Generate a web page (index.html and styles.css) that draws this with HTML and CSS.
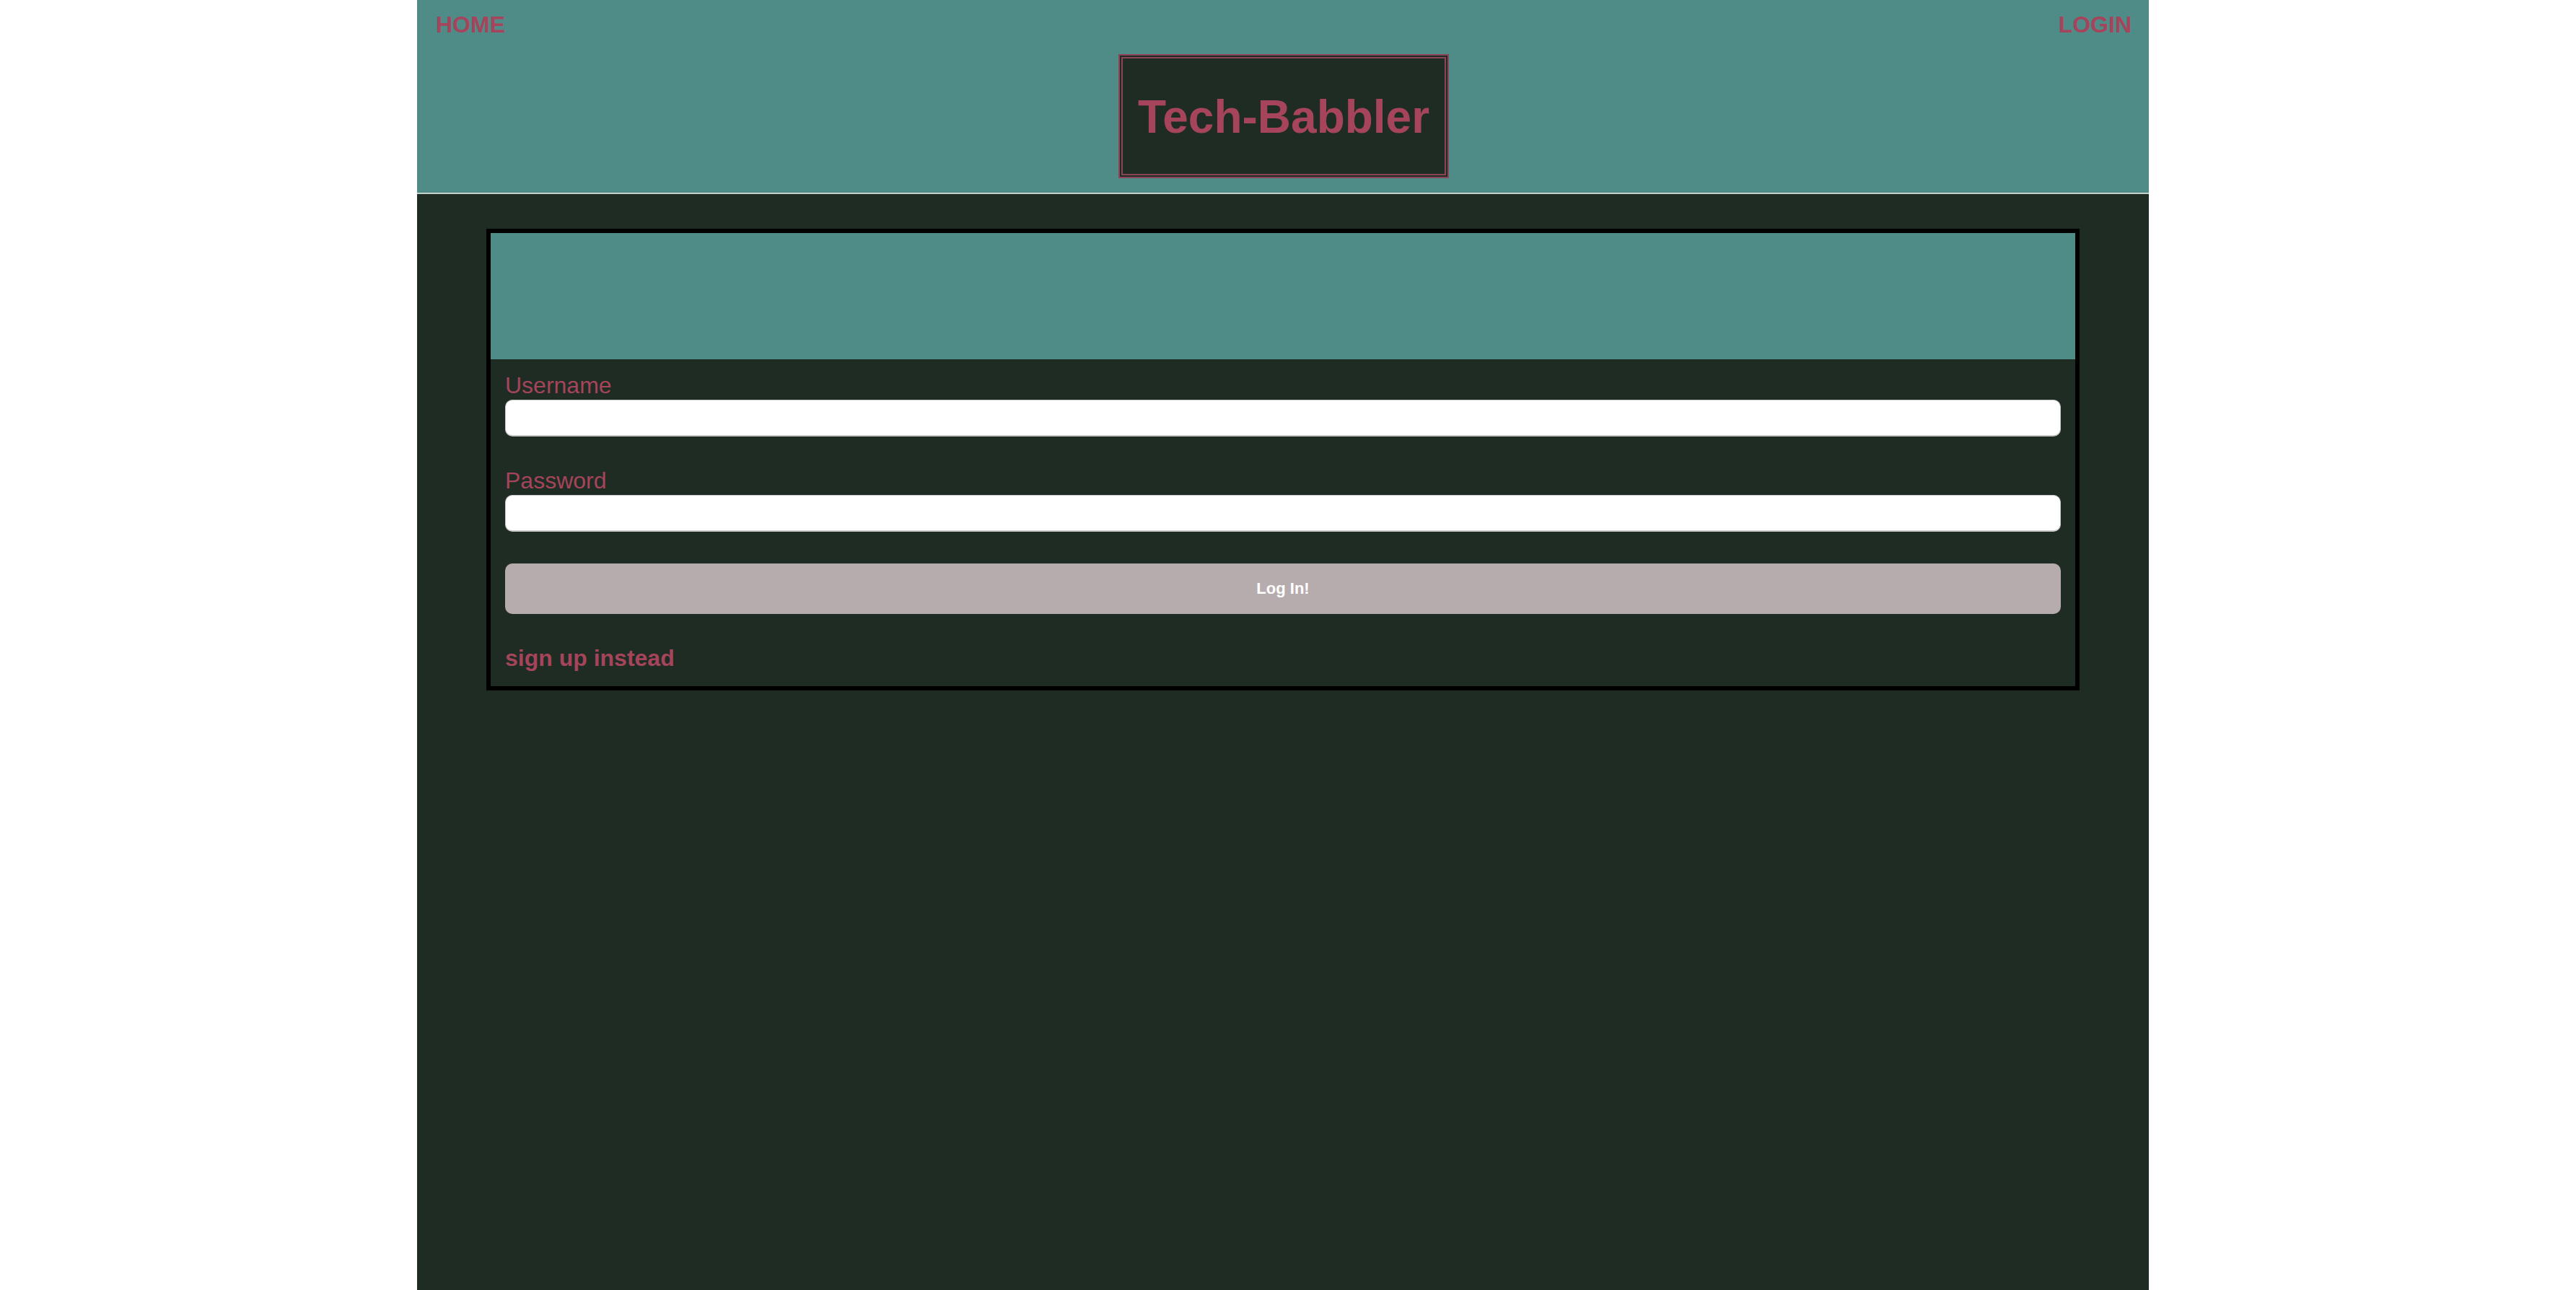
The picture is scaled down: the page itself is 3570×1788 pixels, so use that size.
FILE: index.html
```html
<!DOCTYPE html>
<html lang="en">
<head>
<meta charset="utf-8">
<title>Tech-Babbler</title>
<link rel="stylesheet" href="styles.css">
</head>
<body>
<div class="page">
  <header class="site-header">
    <nav class="nav">
      <a class="nav-link" href="#">HOME</a>
      <a class="nav-link" href="#">LOGIN</a>
    </nav>
    <div class="brand-row">
      <h1 class="brand">Tech-Babbler</h1>
    </div>
  </header>
  <main class="main">
    <section class="card">
      <div class="card-head"></div>
      <form class="card-body">
        <label class="field-label" for="username">Username</label>
        <input class="field-input" id="username" type="text">
        <label class="field-label field-label-next" for="password">Password</label>
        <input class="field-input" id="password" type="password">
        <button class="submit" type="button">Log In!</button>
        <a class="alt-link" href="#">sign up instead</a>
      </form>
    </section>
  </main>
</div>
</body>
</html>
```

FILE: styles.css
```css
* { box-sizing: border-box; }

html, body {
  margin: 0;
  padding: 0;
  background: #ffffff;
}

body {
  padding-right: 14px;
  font-family: "Liberation Sans", Arial, Helvetica, sans-serif;
}

.page {
  width: 2400px;
  margin: 0 auto;
  min-height: 1788px;
  background: #1f2c23;
  display: flex;
  flex-direction: column;
}

.site-header {
  background: #4f8c88;
  border-bottom: 2px solid #c3d0cc;
  padding: 16px 24px 20px 26px;
}

.nav {
  display: flex;
  justify-content: space-between;
}

.nav-link {
  font-size: 32px;
  line-height: 37px;
  font-weight: bold;
  color: #a6445b;
  text-decoration: none;
}

.brand-row {
  display: flex;
  justify-content: center;
  margin-top: 22px;
}

.brand {
  margin: 0;
  font-size: 64px;
  line-height: 74px;
  font-weight: bold;
  color: #a6445b;
  background: #1f2c23;
  border: 6px double #8e4458;
  padding: 44px 21px 42px;
}

.main {
  padding: 48px 96px;
}

.card {
  border: 6px solid #000000;
  background: #1f2c23;
}

.card-head {
  height: 175px;
  background: #4f8c88;
}

.card-body {
  display: flex;
  flex-direction: column;
  align-items: stretch;
  padding: 18px 20px 20px;
  margin: 0;
}

.field-label {
  font-size: 32px;
  line-height: 37px;
  color: #a6445b;
}

.field-label-next {
  margin-top: 43px;
}

.field-input {
  display: block;
  height: 51px;
  margin: 1px 0 0;
  border: 1px solid #c8c8c8;
  border-bottom-width: 2px;
  border-radius: 10px;
  background: #ffffff;
  font-size: 28px;
  padding: 0 12px;
}

.submit {
  margin-top: 44px;
  height: 70px;
  border: none;
  border-radius: 10px;
  background: #b7acad;
  color: #ffffff;
  font-family: "Liberation Sans", Arial, Helvetica, sans-serif;
  font-size: 22px;
  font-weight: bold;
}

.alt-link {
  align-self: flex-start;
  margin-top: 43px;
  font-size: 32px;
  line-height: 37px;
  font-weight: bold;
  color: #a6445b;
  text-decoration: none;
}
```
